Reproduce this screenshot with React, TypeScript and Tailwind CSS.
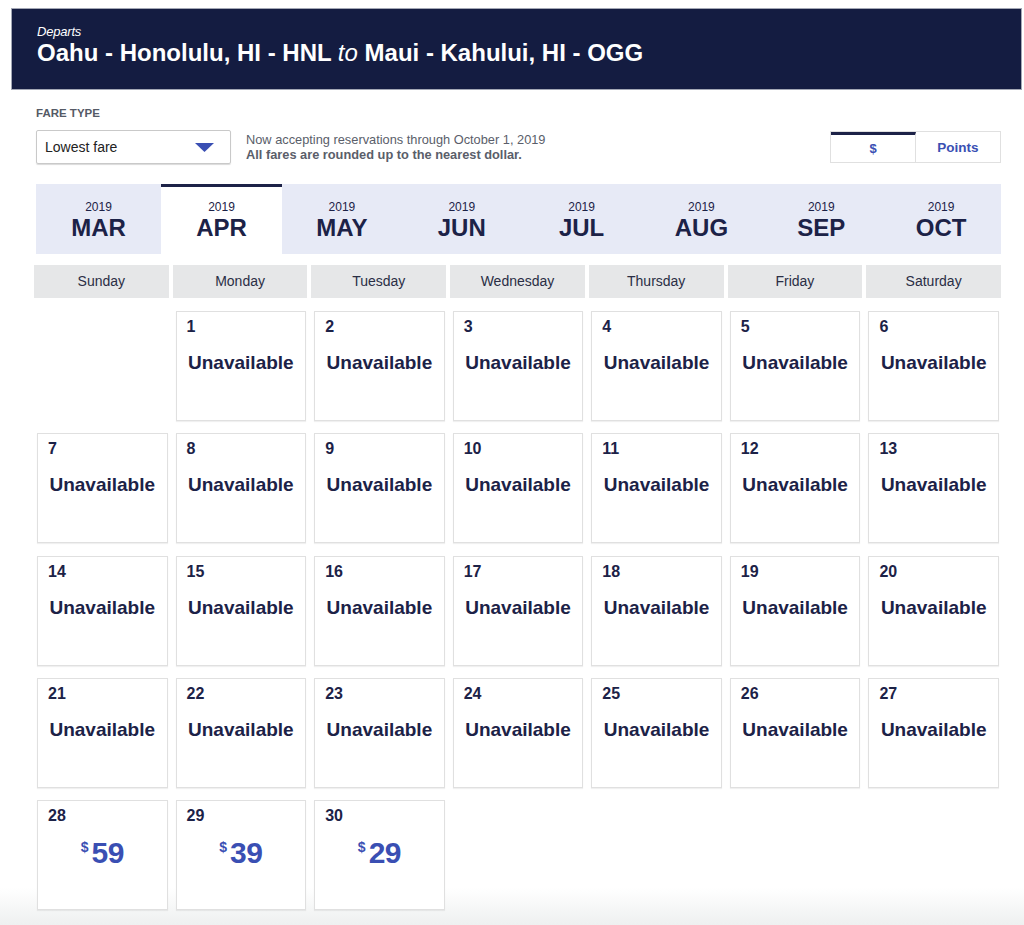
import React from 'react';

const months = ['MAR', 'APR', 'MAY', 'JUN', 'JUL', 'AUG', 'SEP', 'OCT'];
const weekdays = ['Sunday', 'Monday', 'Tuesday', 'Wednesday', 'Thursday', 'Friday', 'Saturday'];
const prices: Record<number, number> = { 28: 59, 29: 39, 30: 29 };

const DayCell: React.FC<{ day: number }> = ({ day }) => {
  const price = prices[day];
  return (
    <div className="h-[110px] bg-white border border-[#e0e0e0] shadow-[0_1px_1px_rgba(0,0,0,0.06)] flex flex-col">
      <div className="pl-[10px] pt-[6px] text-[16px] leading-[18px] font-bold text-[#1c2247]">{day}</div>
      {price ? (
        <div className="mt-[11px] flex justify-center items-start text-[#3a4fb3] font-bold">
          <span className="text-[14px] leading-[14px] mt-[4px] mr-[3px]">$</span>
          <span className="text-[30px] leading-[34px] tracking-[-0.5px]">{price}</span>
        </div>
      ) : (
        <div className="mt-[16px] text-center text-[19px] leading-[22px] font-bold text-[#1c2247]">Unavailable</div>
      )}
    </div>
  );
};

export default function App() {
  const cells: (number | null)[] = [null];
  for (let d = 1; d <= 30; d++) cells.push(d);

  return (
    <div
      className="w-[1024px] h-[925px] overflow-hidden pt-[8px] bg-[linear-gradient(to_bottom,#ffffff_96%,#eef0f0)] text-[#1c2247]"
      style={{ fontFamily: '"Liberation Sans", Arial, sans-serif' }}
    >
      {/* header */}
      <div className="ml-[11px] w-[1011px] h-[82px] bg-[#141c41] border border-[#a3a7b5] pl-[25px] pt-[15px]">
        <div className="text-white italic text-[13px] leading-[16px] tracking-[-0.2px]">Departs</div>
        <div className="text-white font-bold text-[24px] leading-[26px]">
          Oahu - Honolulu, HI - HNL <span className="italic font-normal">to</span> Maui - Kahului, HI - OGG
        </div>
      </div>

      {/* fare controls */}
      <div className="pl-[36px] pr-[23px] mt-[16px]">
        <div className="text-[11.5px] leading-[14px] font-bold text-[#555a66]">FARE TYPE</div>
        <div className="flex items-start mt-[10px]">
          <div className="w-[195px] h-[34px] border border-[#c9c9c9] shadow-[0_1px_1px_rgba(0,0,0,0.15)] rounded-[2px] flex items-center justify-between pl-[8px] pr-[16px]">
            <span className="text-[14px] text-[#222]">Lowest fare</span>
            <svg width="19" height="9" viewBox="0 0 19 9">
              <path d="M0 0 L19 0 L9.5 9 Z" fill="#3a4fb3" />
            </svg>
          </div>
          <div className="ml-[15px] mt-[2px] text-[12.8px] leading-[15px] text-[#5a5e6a]">
            <div>Now accepting reservations through October 1, 2019</div>
            <div className="font-bold">All fares are rounded up to the nearest dollar.</div>
          </div>
          <div className="ml-auto mt-[1px] flex h-[32px] border border-[#e0e0e0]">
            <div className="w-[85px] border-t-[3px] border-[#1c2247] border-r border-r-[#e0e0e0] flex items-center justify-center text-[13px] font-bold text-[#3a4fb3]">
              $
            </div>
            <div className="w-[84px] flex items-center justify-center text-[13.5px] font-bold text-[#3a4fb3] pt-[2px]">
              Points
            </div>
          </div>
        </div>
      </div>

      {/* month tabs */}
      <div className="ml-[36px] w-[965px] mt-[20px] grid grid-cols-[125px_121px_repeat(6,1fr)] h-[70px] bg-[#e7eaf6]">
        {months.map((m) => {
          const active = m === 'APR';
          return (
            <div
              key={m}
              className={
                active
                  ? 'bg-white border-t-[3px] border-[#1c2247] flex flex-col items-center pt-[13px]'
                  : 'flex flex-col items-center pt-[16px]'
              }
            >
              <div className="text-[12px] leading-[15px] text-[#1c2247]">2019</div>
              <div className="text-[24px] leading-[26px] font-bold text-[#1c2247]">{m}</div>
            </div>
          );
        })}
      </div>

      {/* weekday header */}
      <div className="ml-[34px] w-[967px] mt-[11px] grid grid-cols-7 gap-x-[4px]">
        {weekdays.map((w) => (
          <div key={w} className="h-[33px] bg-[#e6e7e8] flex items-center justify-center text-[14px] text-[#2a2e45]">
            {w}
          </div>
        ))}
      </div>

      {/* days */}
      <div className="ml-[37px] w-[962px] mt-[13px] grid grid-cols-7 gap-x-[8px] gap-y-[12.25px]">
        {cells.map((d, i) => (d === null ? <div key={i} /> : <DayCell key={i} day={d} />))}
      </div>
    </div>
  );
}
